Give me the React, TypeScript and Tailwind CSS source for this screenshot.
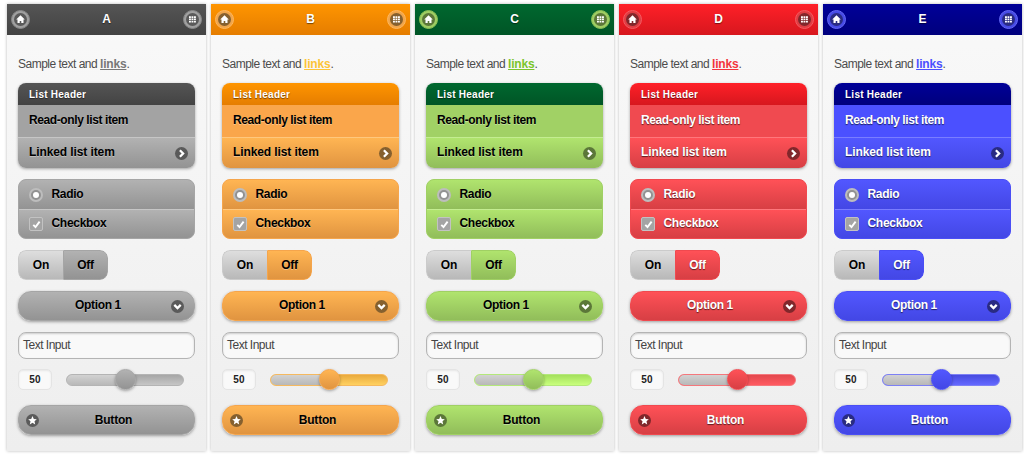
import type { ReactNode } from 'react';

type Theme = {
  name: string;
  bar: string;
  ring: string;
  disc: string;
  link: string;
  flat: string;
  grad: string;
  edge: string;
  line: string;
  text: string;
  track: string;
  trackEdge: string;
};

const darkText = 'text-black [text-shadow:0_1px_0_rgba(255,255,255,0.35)]';
const lightText = 'text-white [text-shadow:0_1px_1px_rgba(0,0,0,0.6)]';

const themes: Theme[] = [
  {
    name: 'A',
    bar: 'bg-linear-to-b from-[#555555] to-[#434343]',
    ring: 'bg-[#a0a0a0] border-[#888888]',
    disc: 'bg-[#5a5a5a]',
    link: 'text-[#777777]',
    flat: 'bg-[#a3a3a3]',
    grad: 'bg-linear-to-b from-[#b2b2b2] to-[#939393]',
    edge: 'border-[#a5a5a5]',
    line: 'border-t-[#c6c6c6]',
    text: darkText,
    track: 'bg-linear-to-b from-[#a6a6a6] to-[#c6c6c6]',
    trackEdge: 'border-[#b4b4b4]',
  },
  {
    name: 'B',
    bar: 'bg-linear-to-b from-[#ff9500] to-[#e57d00]',
    ring: 'bg-[#f0a54c] border-[#ffb75c]',
    disc: 'bg-[#85602f]',
    link: 'text-[#fcc437]',
    flat: 'bg-[#faa64b]',
    grad: 'bg-linear-to-b from-[#ffb553] to-[#e09440]',
    edge: 'border-[#f5a54c]',
    line: 'border-t-[#ffc87e]',
    text: darkText,
    track: 'bg-linear-to-b from-[#e9aa3d] to-[#ffd160]',
    trackEdge: 'border-[#f5b95f]',
  },
  {
    name: 'C',
    bar: 'bg-linear-to-b from-[#00682f] to-[#005526]',
    ring: 'bg-[#9fce63] border-[#88bf55]',
    disc: 'bg-[#5b7739]',
    link: 'text-[#7ac52c]',
    flat: 'bg-[#a1d165]',
    grad: 'bg-linear-to-b from-[#b0e46e] to-[#91bd5a]',
    edge: 'border-[#a0d064]',
    line: 'border-t-[#c4ed91]',
    text: darkText,
    track: 'bg-linear-to-b from-[#a4e05c] to-[#c9ff7d]',
    trackEdge: 'border-[#b4e87a]',
  },
  {
    name: 'D',
    bar: 'bg-linear-to-b from-[#ff2028] to-[#d7171e]',
    ring: 'bg-[#df3d43] border-[#f5595f]',
    disc: 'bg-[#81272b]',
    link: 'text-[#f3343c]',
    flat: 'bg-[#f04a50]',
    grad: 'bg-linear-to-b from-[#ff5157] to-[#d73f44]',
    edge: 'border-[#f0494f]',
    line: 'border-t-[#ff777c]',
    text: lightText,
    track: 'bg-linear-to-b from-[#e3484e] to-[#ff5a61]',
    trackEdge: 'border-[#f5777c]',
  },
  {
    name: 'E',
    bar: 'bg-linear-to-b from-[#000098] to-[#00007d]',
    ring: 'bg-[#474be6] border-[#6468f5]',
    disc: 'bg-[#292b83]',
    link: 'text-[#4b50ff]',
    flat: 'bg-[#4b50ff]',
    grad: 'bg-linear-to-b from-[#5257ff] to-[#4347e5]',
    edge: 'border-[#4a4ef5]',
    line: 'border-t-[#7a7dff]',
    text: lightText,
    track: 'bg-linear-to-b from-[#474bdf] to-[#6468ff]',
    trackEdge: 'border-[#7d80f5]',
  },
];

function Disc({ t, children }: { t: Theme; children: ReactNode }) {
  return (
    <span className={`flex size-[13px] shrink-0 items-center justify-center rounded-full ${t.disc}`}>
      <svg viewBox="0 0 13 13" className="size-[13px]" fill="none" stroke="none">
        {children}
      </svg>
    </span>
  );
}

function Ring({ t, children }: { t: Theme; children: ReactNode }) {
  return (
    <span className={`flex size-[19px] items-center justify-center rounded-full border ${t.ring}`}>
      <Disc t={t}>{children}</Disc>
    </span>
  );
}

const HomeIcon = () => <path d="M6.5 2.2 2.2 6.6h1.3v3.5h2.2V8h1.6v2.1h2.2V6.6h1.3z" fill="#fff" />;

const GridIcon = () => (
  <path
    d="M3 3.3h1.9v1.6H3zM5.5 3.3h1.9v1.6H5.5zM8 3.3h1.9v1.6H8zM3 5.6h1.9v1.6H3zM5.5 5.6h1.9v1.6H5.5zM8 5.6h1.9v1.6H8zM3 7.9h1.9v1.6H3zM5.5 7.9h1.9v1.6H5.5zM8 7.9h1.9v1.6H8z"
    fill="#fff"
  />
);

const StarIcon = () => (
  <path d="M6.5 2.1 7.8 5l3 .3-2.3 2 .7 3.1-2.7-1.6-2.7 1.6.7-3.1-2.3-2 3-.3z" fill="#fff" />
);

function Panel({ t }: { t: Theme }) {
  return (
    <section className="flex h-[447px] w-[199px] shrink-0 flex-col bg-linear-to-b from-[#f9f9f9] to-[#eeeeee] shadow-[0_0_3px_rgba(0,0,0,0.28)]">
      <header className={`flex h-[31px] shrink-0 items-center justify-between px-1 pb-px ${t.bar}`}>
        <Ring t={t}>
          <HomeIcon />
        </Ring>
        <h1 className="text-[12px] leading-none font-bold text-white [text-shadow:0_1px_1px_rgba(0,0,0,0.5)]">{t.name}</h1>
        <Ring t={t}>
          <GridIcon />
        </Ring>
      </header>

      <div className="flex flex-col px-[11px] pt-[21px]">
        <p className="h-[27px] text-[12px] leading-[16px] tracking-[-0.5px] text-[#4c4c4c]">
          Sample text and <a className={`font-bold tracking-[-0.2px] underline ${t.link}`}>links</a>.
        </p>

        <ul className="overflow-hidden rounded-lg shadow-[0_1px_3px_rgba(0,0,0,0.35)]">
          <li className={`flex h-[22px] items-center pt-px pl-[11px] text-[10px] font-bold tracking-[0.25px] text-white [text-shadow:0_1px_1px_rgba(0,0,0,0.5)] ${t.bar}`}>
            List Header
          </li>
          <li className={`flex h-[32px] items-center pb-[2px] pl-[11px] text-[12px] font-bold tracking-[-0.4px] ${t.flat} ${t.text}`}>
            Read-only list item
          </li>
          <li className={`flex h-[31px] items-center justify-between border-t pr-[7px] pl-[11px] text-[12px] font-bold tracking-[-0.1px] ${t.line} ${t.grad} ${t.text}`}>
            <span className="pb-[2px]">Linked list item</span>
            <Disc t={t}>
              <path d="m4.9 3.3 3.2 3.2-3.2 3.2" stroke="#fff" strokeWidth="2.3" />
            </Disc>
          </li>
        </ul>

        <div className={`mt-[11px] flex h-[60px] flex-col overflow-hidden rounded-lg border text-[12px] font-bold tracking-[-0.3px] ${t.edge} ${t.flat} ${t.text}`}>
          <label className={`flex h-[29px] items-center gap-[8.5px] pl-[10px] ${t.grad}`}>
            <span className="flex size-[14px] items-center justify-center rounded-full border-2 border-[#bdbdbd] bg-[#929292]">
              <span className="size-[6px] rounded-full bg-white" />
            </span>
            <span className="pb-px">Radio</span>
          </label>
          <label className={`flex h-[29px] items-center gap-[8.5px] border-t pl-[10px] ${t.line} ${t.grad}`}>
            <span className="flex size-[14px] items-center justify-center rounded-[2px] border border-[#c2c2c2] bg-[#a4a4a4]">
              <svg viewBox="0 0 11 11" className="size-[11px]" fill="none">
                <path d="m2.3 5.8 2.2 2.3 4.1-5.5" stroke="#fff" strokeWidth="1.9" />
              </svg>
            </span>
            <span className="pb-[2px]">Checkbox</span>
          </label>
        </div>

        <div className="mt-[11px] flex h-[30px] w-[90px] overflow-hidden rounded-lg text-[12px] font-bold tracking-[-0.2px]">
          <span className={`flex w-[45px] items-center justify-center rounded-l-lg border border-r-0 border-[#cbcbcb] bg-linear-to-b from-[#dedede] to-[#b8b8b8] ${darkText}`}>
            On
          </span>
          <span className={`flex w-[45px] items-center justify-center rounded-r-lg border ${t.edge} ${t.grad} ${t.text}`}>Off</span>
        </div>

        <div className={`mt-[11px] grid h-[30px] grid-cols-[20px_1fr_20px] items-center rounded-[13px] border px-[3px] text-[12px] font-bold tracking-[-0.35px] shadow-[0_1px_3px_rgba(0,0,0,0.35)] ${t.edge} ${t.grad} ${t.text}`}>
          <span />
          <span className="pr-[17px] pb-[2px] text-center">Option 1</span>
          <Disc t={t}>
            <path d="m3.3 4.9 3.2 3.2 3.2-3.2" stroke="#fff" strokeWidth="2.3" />
          </Disc>
        </div>

        <div className="mt-[11px] flex h-[27px] items-center rounded-lg border border-[#b4b4b4] bg-[#f9f9f9] pb-px pl-1 text-[12px] tracking-[-0.5px] text-[#444444] shadow-[inset_0_1px_2px_rgba(0,0,0,0.18)]">
          Text Input
        </div>

        <div className="mt-[10px] flex h-[21px] items-center">
          <span className="flex h-[21px] w-[34px] items-center justify-center rounded-[5px] border border-[#e4e4e4] bg-[#f9f9f9] text-[10px] font-bold tracking-[0.25px] text-[#222222] shadow-[inset_0_1px_2px_rgba(0,0,0,0.08)]">
            50
          </span>
          <span className={`relative ml-[14px] flex h-[12px] w-[118px] overflow-visible rounded-full border ${t.track} ${t.trackEdge}`}>
            <span className="w-[59px] rounded-l-full bg-linear-to-b from-[#d2d2d2] to-[#b8b8b8]" />
            <span className={`absolute top-[-6px] left-[48px] size-[21px] rounded-full border shadow-[0_1px_3px_rgba(0,0,0,0.35)] ${t.edge} ${t.grad}`} />
          </span>
        </div>

        <div className={`mt-[15px] grid h-[30px] grid-cols-[20px_1fr_20px] items-center rounded-[13px] border px-[7px] text-[12px] font-bold tracking-[-0.2px] shadow-[0_1px_3px_rgba(0,0,0,0.35)] ${t.edge} ${t.grad} ${t.text}`}>
          <Disc t={t}>
            <StarIcon />
          </Disc>
          <span className="pl-[14px] text-center">Button</span>
          <span />
        </div>
      </div>
    </section>
  );
}

export default function App() {
  return (
    <main className="flex h-[458px] w-[1024px] gap-[5px] overflow-hidden bg-white pt-1 pl-[7px] font-['Liberation_Sans',Arial,sans-serif]">
      {themes.map((t) => (
        <Panel key={t.name} t={t} />
      ))}
    </main>
  );
}
